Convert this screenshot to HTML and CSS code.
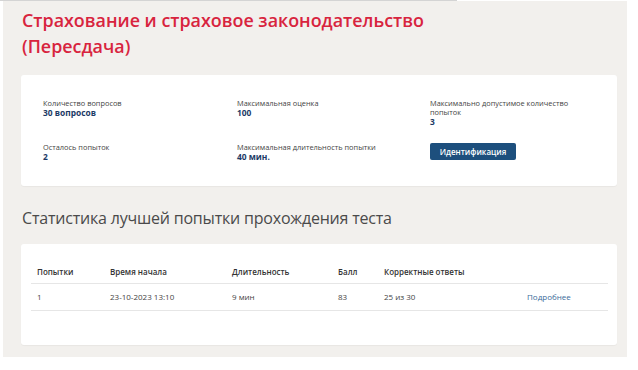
FILE: index.html
```html
<!DOCTYPE html>
<html lang="ru">
<head>
<meta charset="utf-8">
<link rel="stylesheet" href="styles.css">
</head>
<body>
<div class="topline"></div>
<div class="page">
  <h1 class="title">Страхование и страховое законодательство (Пересдача)</h1>
  <div class="card info">
    <div class="item">
      <div class="label">Количество вопросов</div>
      <div class="value">30 вопросов</div>
    </div>
    <div class="item">
      <div class="label">Максимальная оценка</div>
      <div class="value">100</div>
    </div>
    <div class="item">
      <div class="label narrow">Максимально допустимое количество попыток</div>
      <div class="value">3</div>
    </div>
    <div class="item">
      <div class="label">Осталось попыток</div>
      <div class="value">2</div>
    </div>
    <div class="item">
      <div class="label">Максимальная длительность попытки</div>
      <div class="value">40 мин.</div>
    </div>
    <div class="item">
      <button class="btn">Идентификация</button>
    </div>
  </div>
  <h2 class="subtitle">Статистика лучшей попытки прохождения теста</h2>
  <div class="card tablecard">
    <table class="stats">
      <thead>
        <tr>
          <th class="c1">Попытки</th>
          <th class="c2">Время начала</th>
          <th class="c3">Длительность</th>
          <th class="c4">Балл</th>
          <th class="c5">Корректные ответы</th>
          <th class="c6"></th>
        </tr>
      </thead>
      <tbody>
        <tr>
          <td>1</td>
          <td>23-10-2023 13:10</td>
          <td>9 мин</td>
          <td>83</td>
          <td>25 из 30</td>
          <td><a class="more" href="#">Подробнее</a></td>
        </tr>
      </tbody>
    </table>
  </div>
</div>
</body>
</html>
```
FILE: styles.css
```css
* { box-sizing: border-box; }
html, body { margin: 0; padding: 0; background: #ffffff; }
body { font-family: "Open Sans", "Noto Sans", sans-serif; color: #333; }

.topline { width: 457px; height: 1px; background: #d4d4d4; }

.page {
  margin-left: 3px;
  width: 624px;
  height: 356px;
  background: #f2f0ed;
  padding: 6px 10px 0 18px;
}

.title {
  margin: 0 0 16px 1px;
  max-width: 430px;
  font-family: "Open Sans", sans-serif;
  font-weight: 600;
  font-size: 17.9px;
  line-height: 26px;
  letter-spacing: 0;
  color: #d8243e;
}

.card {
  background: #fff;
  border-radius: 3px;
  box-shadow: 0 1px 1px rgba(0,0,0,0.04);
}

.info {
  height: 111px;
  display: grid;
  grid-template-columns: 194px 193px 1fr;
  row-gap: 16px;
  padding: 24px 20px 0 22px;
  align-content: start;
}

.label {
  font-size: 7.4px;
  line-height: 9px;
  color: #444;
}
.label.narrow { max-width: 140px; }
.value {
  font-size: 8.4px;
  line-height: 10px;
  font-weight: 700;
  color: #1c3a66;
}

.btn {
  display: block;
  height: 17px;
  width: 86px;
  padding: 0;
  margin: 0;
  border: 0;
  border-radius: 2px;
  background: #1d4f7d;
  color: #fff;
  font-family: "Open Sans", sans-serif;
  font-size: 8px;
  font-weight: 600;
  line-height: 17px;
  text-align: center;
}

.subtitle {
  margin: 20px 0 0 1px;
  font-weight: 400;
  font-size: 16px;
  letter-spacing: -0.2px;
  line-height: 24px;
  height: 38px;
  color: #4a4a4a;
}

.tablecard {
  height: 101px;
  padding: 17px 9px 0 10px;
}

.stats {
  width: 100%;
  border-collapse: collapse;
  font-size: 8px;
  color: #444;
}
.stats th {
  text-align: left;
  font-weight: 600;
  height: 22px;
  padding: 0 6px;
  border-bottom: 1px solid #e6e6e6;
  color: #333;
}
.stats td {
  height: 27px;
  padding: 0 6px;
  border-bottom: 1px solid #e6e6e6;
}
.c1 { width: 73px; }
.c2 { width: 122px; }
.c3 { width: 106px; }
.c4 { width: 46px; }
.c5 { width: 143px; }

.more { color: #3b6a9a; text-decoration: none; }
```
